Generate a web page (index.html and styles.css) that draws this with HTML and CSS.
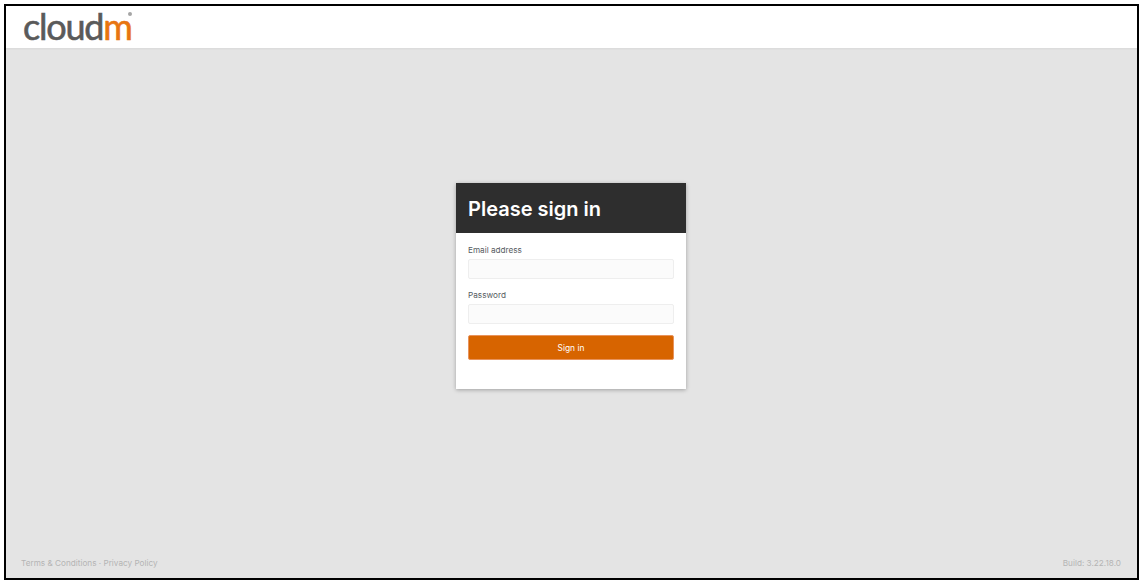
FILE: index.html
```html
<!DOCTYPE html>
<html lang="en">
<head>
<meta charset="utf-8">
<title>Cloudm - Sign in</title>
<link rel="stylesheet" href="styles.css">
</head>
<body>
<div class="frame">
  <header class="topbar">
    <div class="logo"><span class="logo-grey">cloud</span><span class="logo-orange">m</span><span class="logo-reg"></span></div>
  </header>
  <main class="stage">
    <form class="card">
      <div class="card-head"><h1>Please sign in</h1></div>
      <div class="card-body">
        <label class="field">
          <span class="field-label">Email address</span>
          <input class="field-input" type="email">
        </label>
        <label class="field">
          <span class="field-label">Password</span>
          <input class="field-input" type="password">
        </label>
        <button class="submit" type="button">Sign in</button>
      </div>
    </form>
  </main>
  <footer class="foot">
    <span>Terms &amp; Conditions · Privacy Policy</span>
    <span>Build: 3.22.18.0</span>
  </footer>
</div>
</body>
</html>
```
FILE: styles.css
```css
* { box-sizing: border-box; }
html, body { height: 100%; margin: 0; }
body {
  background: #fff;
  padding: 4px 4px 3px 4px;
  font-family: Inter, "Liberation Sans", sans-serif;
}
.frame {
  height: 100%;
  border: 2px solid #000;
  background: #e4e4e4;
  display: flex;
  flex-direction: column;
}
.topbar {
  height: 42px;
  flex: none;
  background: #fff;
  padding-left: 17px;
  padding-bottom: 3px;
  box-shadow: 0 1px 2px rgba(0,0,0,.05);
  display: flex;
  align-items: center;
}
.logo {
  font-family: Lato, "Open Sans", sans-serif;
  font-size: 36px;
  line-height: 40px;
  letter-spacing: -1.2px;
  -webkit-text-stroke: 0.6px currentColor;
  position: relative;
}
.logo-grey { color: #5a5a5a; }
.logo-orange { color: #e8750f; }
.logo-reg {
  position: absolute;
  right: 0;
  top: 6px;
  width: 4px;
  height: 4px;
  border-radius: 50%;
  background: #a5a5a5;
}
.stage {
  flex: 1;
  display: flex;
  align-items: center;
  justify-content: center;
  padding-bottom: 24px;
  padding-right: 1px;
}
.card {
  width: 230px;
  height: 206px;
  background: #fff;
  box-shadow: 0 1px 4px rgba(0,0,0,.3);
}
.card-head {
  height: 50px;
  background: #2e2e2e;
  padding: 0 12px;
  display: flex;
  align-items: center;
}
.card-head h1 {
  margin: 0;
  padding-top: 2px;
  color: #fff;
  font-size: 20px;
  font-weight: 600;
  line-height: 24px;
}
.card-body {
  padding: 11px 12px 0;
  display: flex;
  flex-direction: column;
}
.field {
  display: flex;
  flex-direction: column;
  margin-bottom: 10px;
}
.field-label {
  font-size: 8.2px;
  line-height: 12px;
  color: #565b61;
  margin-bottom: 3px;
}
.field-input {
  height: 20px;
  width: 100%;
  margin: 0;
  border: 1px solid #eee;
  border-radius: 2px;
  background: #fbfbfb;
  padding: 0 6px;
}
.submit {
  height: 25px;
  width: 100%;
  margin-top: 1px;
  border: 1px solid #e8935c;
  border-radius: 2px;
  background: #d76400;
  color: #fff;
  font-family: inherit;
  font-size: 8.4px;
  padding: 0;
}
.foot {
  flex: none;
  height: 30px;
  padding: 0 16px 1px 15px;
  display: flex;
  justify-content: space-between;
  align-items: center;
  font-size: 8.2px;
  color: #b4b4b4;
}
```
